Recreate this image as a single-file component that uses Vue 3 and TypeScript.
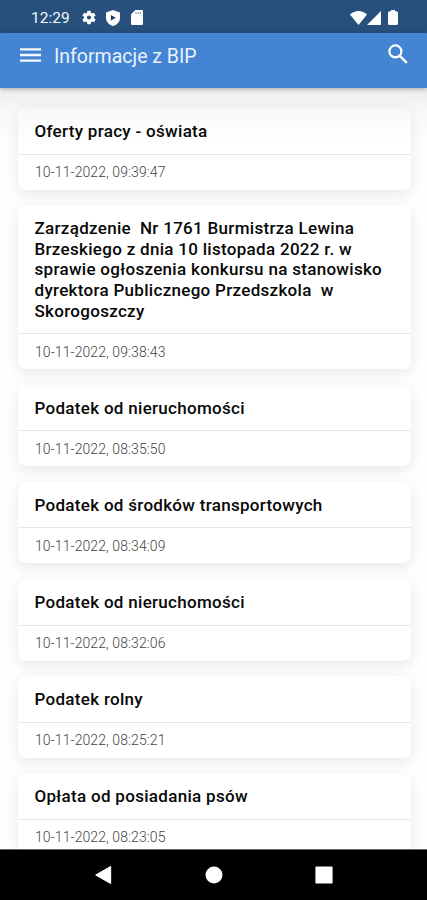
<script setup lang="ts">
interface Notice {
  title: string
  date: string
}

const notices: Notice[] = [
  { title: 'Oferty pracy - oświata', date: '10-11-2022, 09:39:47' },
  {
    title:
      'Zarządzenie  Nr 1761 Burmistrza Lewina\nBrzeskiego z dnia 10 listopada 2022 r. w\nsprawie ogłoszenia konkursu na stanowisko\ndyrektora Publicznego Przedszkola  w\nSkorogoszczy',
    date: '10-11-2022, 09:38:43',
  },
  { title: 'Podatek od nieruchomości', date: '10-11-2022, 08:35:50' },
  { title: 'Podatek od środków transportowych', date: '10-11-2022, 08:34:09' },
  { title: 'Podatek od nieruchomości', date: '10-11-2022, 08:32:06' },
  { title: 'Podatek rolny', date: '10-11-2022, 08:25:21' },
  { title: 'Opłata od posiadania psów', date: '10-11-2022, 08:23:05' },
]
</script>

<template>
  <div class="screen">
    <div class="status">
      <span class="clock">12:29</span>
      <svg class="gear" viewBox="2 2 20 20">
        <path fill="#fff" d="M19.14 12.94c.04-.3.06-.61.06-.94 0-.32-.02-.64-.07-.94l2.03-1.58c.18-.14.23-.41.12-.61l-1.92-3.32c-.12-.22-.37-.29-.59-.22l-2.39.96c-.5-.38-1.03-.7-1.62-.94l-.36-2.54c-.04-.24-.24-.41-.48-.41h-3.84c-.24 0-.43.17-.47.41l-.36 2.54c-.59.24-1.13.57-1.62.94l-2.39-.96c-.22-.08-.47 0-.59.22L2.74 8.87c-.12.21-.08.47.12.61l2.03 1.58c-.05.3-.09.63-.09.94s.02.64.07.94l-2.03 1.58c-.18.14-.23.41-.12.61l1.92 3.32c.12.22.37.29.59.22l2.39-.96c.5.38 1.03.7 1.62.94l.36 2.54c.05.24.24.41.48.41h3.84c.24 0 .44-.17.47-.41l.36-2.54c.59-.24 1.13-.56 1.62-.94l2.39.96c.22.08.47 0 .59-.22l1.92-3.32c.12-.22.07-.47-.12-.61zM12 15a3 3 0 1 1 0-6 3 3 0 0 1 0 6z" />
      </svg>
      <svg class="shield" viewBox="0 0 14 16">
        <path fill="#fff" d="M7 0l7 2.6v5.2c0 3.800-2.600 6.900-7 8.200-4.400-1.300-7-4.400-7-8.200V2.600z" />
        <path fill="#1d3c66" d="M4.900 5v5.600l4.900-2.800z" />
      </svg>
      <svg class="sdcard" viewBox="0 0 12 15">
        <path fill="#fff" d="M4.300 0H10.700Q12 0 12 1.300V13.700Q12 15 10.700 15H1.300Q0 15 0 13.700V4.300z" />
        <path stroke="#8296b0" stroke-width="1" d="M5 2v2M7.200 2v2M9.400 2v2" />
      </svg>
      <div class="signals">
        <svg class="wifi" viewBox="0 0 17 14">
          <path fill="#fff" d="M8.500 14L0 3.600C4.800-1.200 12.200-1.200 17 3.600z" />
        </svg>
        <svg class="cell" viewBox="0 0 14 14"><path fill="#fff" d="M14 0v14H0z" /></svg>
        <svg class="battery" viewBox="0 0 10 15">
          <path fill="#fff" d="M3 0h4v1.200h1.500Q10 1.200 10 3V13.500Q10 15 8.500 15h-7Q0 15 0 13.500V3Q0 1.200 1.500 1.200H3z" />
        </svg>
      </div>
    </div>

    <header class="appbar">
      <svg class="menu" viewBox="0 0 21 14">
        <path stroke="#f4f8fd" stroke-width="2.300" d="M0 1.300h21M0 7h21M0 12.700h21" />
      </svg>
      <h1 class="heading">Informacje z BIP</h1>
      <svg class="search" viewBox="0 0 20 20">
        <circle cx="7.400" cy="7.400" r="6" fill="none" stroke="#fff" stroke-width="2.200" />
        <path stroke="#fff" stroke-width="2.600" d="M11.800 11.800l7 7" />
      </svg>
    </header>

    <main class="list">
      <article v-for="(notice, i) in notices" :key="i" class="card">
        <h2 class="title">{{ notice.title }}</h2>
        <p class="date">{{ notice.date }}</p>
      </article>
    </main>

    <nav class="navbar">
      <svg viewBox="0 0 18 20"><path fill="#fff" d="M15.700 1.400v17.200L0.700 10z" stroke="#fff" stroke-linejoin="round" /></svg>
      <svg viewBox="0 0 18 20"><circle cx="9" cy="10" r="8.500" fill="#fff" /></svg>
      <svg viewBox="0 0 18 20"><rect x="0.400" y="1.400" width="17.200" height="17.200" rx="1" fill="#fff" /></svg>
    </nav>
  </div>
</template>

<style>
body {
  margin: 0;
}
</style>

<style scoped>
.screen {
  width: 427px;
  height: 900px;
  display: flex;
  flex-direction: column;
  overflow: hidden;
  background: #fefefe;
  font-family: Roboto, sans-serif;
}
.status {
  flex: none;
  height: 33px;
  box-sizing: border-box;
  padding: 2px 29px 0 31px;
  display: flex;
  align-items: center;
  background: #28507d;
  color: #f5f8fb;
}
.status svg {
  display: block;
  flex: none;
}
.clock {
  width: 51px;
  font-size: 15.500px;
}
.gear {
  width: 14px;
  height: 15px;
}
.shield {
  width: 14px;
  height: 16px;
  margin-left: 10px;
}
.sdcard {
  width: 12px;
  height: 15px;
  margin-left: 11px;
}
.signals {
  margin-left: auto;
  display: flex;
  align-items: center;
}
.wifi {
  width: 17px;
  height: 14px;
}
.cell {
  width: 14px;
  height: 14px;
}
.battery {
  width: 10px;
  height: 15px;
  margin-left: 7px;
}
.appbar {
  position: relative;
  z-index: 1;
  flex: none;
  height: 55px;
  box-sizing: border-box;
  padding: 0 19px 10px 20px;
  display: flex;
  align-items: center;
  background: #4385d3;
  box-shadow: 0 1px 5px rgba(0, 0, 0, 0.3);
}
.menu {
  width: 21px;
  height: 14px;
  margin-top: -1px;
}
.heading {
  margin: 3px 0 0 13px;
  font-size: 19.500px;
  line-height: 24px;
  font-weight: 400;
  color: #e9f2fc;
}
.search {
  width: 20px;
  height: 20px;
  margin: -3px 0 0 auto;
}
.list {
  position: relative;
  flex: 1;
  min-height: 0;
  box-sizing: border-box;
  padding: 20.300px 16.500px 0 18px;
  display: flex;
  flex-direction: column;
  gap: 15.700px;
  overflow: hidden;
}
.list::after {
  content: '';
  position: absolute;
  inset: 0 0 auto;
  height: 60px;
  background: linear-gradient(rgba(0, 0, 0, 0.065), rgba(0, 0, 0, 0.025) 40%, rgba(0, 0, 0, 0));
}
.card {
  flex: none;
  border-radius: 8px;
  background: #fff;
  box-shadow: 0 4px 14px rgba(0, 0, 0, 0.09);
}
.title {
  margin: 0;
  padding: 12.900px 16px 12px 16.500px;
  border-bottom: 1px solid #e7e7e7;
  font-size: 17px;
  line-height: 20.550px;
  font-weight: 500;
  letter-spacing: 0.300px;
  white-space: pre;
  color: #080808;
}
.date {
  margin: 0;
  padding: 9.500px 17px 8.500px;
  font-size: 14px;
  line-height: 17.050px;
  font-weight: 300;
  letter-spacing: 0.090px;
  color: #444;
}
.navbar {
  flex: none;
  height: 51px;
  box-sizing: border-box;
  display: flex;
  justify-content: center;
  align-items: center;
  gap: 92px;
  border-top: 1px solid #666;
  background: #000;
}
.navbar svg {
  width: 18px;
  height: 20px;
}
</style>
